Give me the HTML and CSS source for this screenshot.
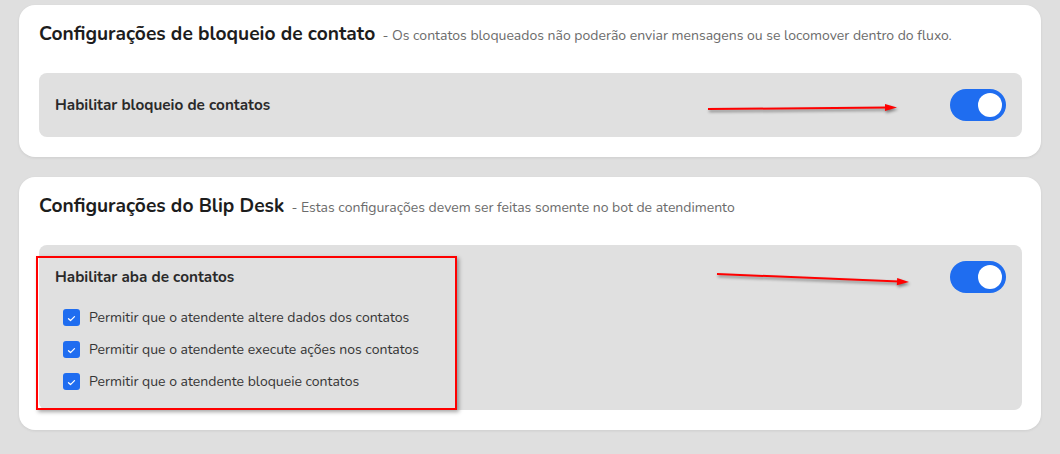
FILE: index.html
```html
<!DOCTYPE html>
<html lang="pt-br">
  <head>
    <meta charset="UTF-8" />
    <meta name="viewport" content="width=device-width, initial-scale=1.0" />
    <title>Configurações</title>
    <link rel="stylesheet" href="styles.css">
  </head>
  <body>
    <div class="page">
      <!-- Bloqueio de contato -->
      <section class="card">
        <h2 class="card-title">
          Configurações de bloqueio de contato
          <span class="card-subtitle">- Os contatos bloqueados não poderão enviar mensagens ou se locomover dentro do fluxo.</span>
        </h2>
        <div class="option-box">
          <div class="option-row">
            <span class="option-label">Habilitar bloqueio de contatos</span>
            <span class="toggle on"><span class="knob"></span></span>
          </div>
          <svg class="arrow arrow-one" width="200" height="20" viewBox="0 0 200 20">
            <line x1="4" y1="10" x2="184" y2="8.6" stroke="#ff0000" stroke-width="2" />
            <polygon points="193,8.5 181,5 181,12" fill="#ff0000" />
          </svg>
        </div>
      </section>

      <!-- Blip Desk -->
      <section class="card">
        <h2 class="card-title">
          Configurações do Blip Desk
          <span class="card-subtitle">- Estas configurações devem ser feitas somente no bot de atendimento</span>
        </h2>
        <div class="option-box expanded">
          <div class="option-row">
            <span class="option-label">Habilitar aba de contatos</span>
            <span class="toggle on"><span class="knob"></span></span>
          </div>
          <ul class="check-list">
            <li>
              <span class="checkbox">
                <svg width="9" height="7" viewBox="0 0 9 7"><polyline points="1.5,3.8 3.5,5.6 7.5,1.6" fill="none" stroke="#fff" stroke-width="1.3" stroke-linecap="round" stroke-linejoin="round" /></svg>
              </span>
              Permitir que o atendente altere dados dos contatos
            </li>
            <li>
              <span class="checkbox">
                <svg width="9" height="7" viewBox="0 0 9 7"><polyline points="1.5,3.8 3.5,5.6 7.5,1.6" fill="none" stroke="#fff" stroke-width="1.3" stroke-linecap="round" stroke-linejoin="round" /></svg>
              </span>
              Permitir que o atendente execute ações nos contatos
            </li>
            <li>
              <span class="checkbox">
                <svg width="9" height="7" viewBox="0 0 9 7"><polyline points="1.5,3.8 3.5,5.6 7.5,1.6" fill="none" stroke="#fff" stroke-width="1.3" stroke-linecap="round" stroke-linejoin="round" /></svg>
              </span>
              Permitir que o atendente bloqueie contatos
            </li>
          </ul>
          <div class="highlight-frame"></div>
          <svg class="arrow arrow-two" width="210" height="24" viewBox="0 0 210 24">
            <line x1="4" y1="7" x2="186" y2="14.6" stroke="#ff0000" stroke-width="2" />
            <polygon points="196,15 184.2,11 183.8,18.2" fill="#ff0000" />
          </svg>
        </div>
      </section>
    </div>
  </body>
</html>
```

FILE: styles.css
```css
* {
  box-sizing: border-box;
  font-family: "Nunito", Lato, sans-serif;
}

body {
  margin: 0;
  background-color: #dfdfdf;
  height: 100vh;
}

.page {
  display: flex;
  flex-direction: column;
  gap: 20px;
  padding: 5px 19px 0 19px;
}

.card {
  background-color: #ffffff;
  border-radius: 16px;
  padding: 17px 19px 20px 20px;
  box-shadow: 0 1px 3px rgba(0, 0, 0, 0.08);
}

.card-title {
  margin: 0 0 27px 0;
  height: 24px;
  font-size: 19.2px;
  line-height: 24px;
  font-weight: 700;
  color: #1d1d1d;
  white-space: nowrap;
}

.card-subtitle {
  font-size: 14px;
  font-weight: 400;
  color: #6b6b6b;
  margin-left: 2px;
}

.option-box {
  position: relative;
  background-color: #e0e0e0;
  border-radius: 8px;
  padding: 16px;
}

.option-box.expanded {
  padding-bottom: 13px;
}

.option-row {
  display: flex;
  align-items: center;
  justify-content: space-between;
  height: 32px;
}

.option-label {
  font-size: 15.3px;
  font-weight: 700;
  color: #2a2a2a;
}

.toggle {
  display: flex;
  align-items: center;
  justify-content: flex-end;
  width: 56px;
  height: 32px;
  padding: 4px;
  border-radius: 16px;
  background-color: #1f6df0;
}

.knob {
  width: 24px;
  height: 24px;
  border-radius: 50%;
  background-color: #ffffff;
}

.check-list {
  list-style: none;
  margin: 8px 0 0 0;
  padding: 0 0 0 8px;
}

.check-list li {
  display: flex;
  align-items: center;
  gap: 9px;
  height: 32px;
  font-size: 14px;
  color: #353535;
}

.checkbox {
  display: flex;
  align-items: center;
  justify-content: center;
  width: 17px;
  height: 17px;
  border-radius: 3px;
  background-color: #1f6df0;
  padding-top: 3px;
}

/* anotações em vermelho por cima do print */
.highlight-frame {
  position: absolute;
  left: -3px;
  top: 11px;
  width: 421px;
  bottom: 0;
  border: 2px solid #ff0000;
  box-shadow: 2px 2px 4px rgba(0, 0, 0, 0.35);
}

.arrow {
  position: absolute;
  filter: drop-shadow(1px 2px 1.5px rgba(0, 0, 0, 0.45));
}

.arrow-one {
  left: 665px;
  top: 26px;
}

.arrow-two {
  left: 674px;
  top: 22px;
}
```
